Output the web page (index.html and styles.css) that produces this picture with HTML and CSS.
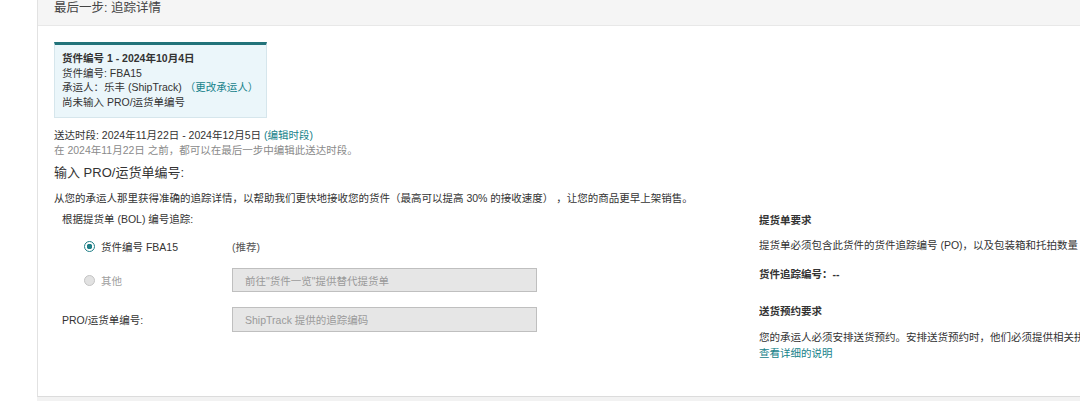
FILE: index.html
```html
<!DOCTYPE html>
<html lang="zh-CN">
<head>
<meta charset="utf-8">
<title>最后一步: 追踪详情</title>
<link rel="stylesheet" href="styles.css">
</head>
<body>
<div class="frame">
  <div class="panel">
    <div class="panel-head">最后一步: 追踪详情</div>
    <div class="panel-body">
      <div class="card">
        <div class="card-title">货件编号 1 - 2024年10月4日</div>
        <div>货件编号: FBA15</div>
        <div>承运人：乐丰 (ShipTrack) <a class="link">（更改承运人）</a></div>
        <div>尚未输入 PRO/运货单编号</div>
      </div>
      <div class="window">
        <div>送达时段: 2024年11月22日 - 2024年12月5日 <a class="link">(编辑时段)</a></div>
        <div class="muted">在 2024年11月22日 之前，都可以在最后一步中编辑此送达时段。</div>
      </div>
      <h2 class="section-title">输入 PRO/运货单编号:</h2>
      <p class="desc">从您的承运人那里获得准确的追踪详情，以帮助我们更快地接收您的货件（最高可以提高 30% 的接收速度）&nbsp;，让您的商品更早上架销售。</p>
      <div class="columns">
        <div class="form">
          <div class="form-label">根据提货单 (BOL) 编号追踪:</div>
          <div class="row row-1">
            <div class="radio-cell">
              <span class="radio checked"></span>
              <span>货件编号 FBA15</span>
            </div>
            <div class="field-cell note">(推荐)</div>
          </div>
          <div class="row row-2">
            <div class="radio-cell disabled">
              <span class="radio off"></span>
              <span>其他</span>
            </div>
            <div class="field-cell"><div class="input">前往"货件一览"提供替代提货单</div></div>
          </div>
          <div class="row row-3">
            <div class="plain-label">PRO/运货单编号:</div>
            <div class="field-cell"><div class="input">ShipTrack 提供的追踪编码</div></div>
          </div>
        </div>
        <div class="aside">
          <div class="aside-title">提货单要求</div>
          <div class="aside-text">提货单必须包含此货件的货件追踪编号 (PO)，以及包装箱和托拍数量</div>
          <div class="aside-title po">货件追踪编号：--</div>
          <div class="aside-title appt">送货预约要求</div>
          <div class="aside-text appt-text">您的承运人必须安排送货预约。安排送货预约时，他们必须提供相关拼装信息。<br><a class="link">查看详细的说明</a></div>
        </div>
      </div>
    </div>
  </div>
  <div class="below"></div>
</div>
</body>
</html>
```

FILE: styles.css
```css
html, body {
  margin: 0;
  padding: 0;
  background: #ffffff;
  overflow: hidden;
}
body {
  font-family: "Liberation Sans", "Noto Sans CJK SC", sans-serif;
  font-size: 10.5px;
  color: #333333;
  width: 1080px;
  height: 401px;
}
.frame {
  width: 1080px;
  height: 401px;
  overflow: hidden;
}
.panel {
  margin-left: 37px;
  height: 397px;
  border-left: 1px solid #e2e2e2;
  border-bottom: 1px solid #dcdcdc;
  box-sizing: border-box;
  background: #ffffff;
}
.below {
  margin-left: 37px;
  height: 4px;
  background: #f2f2f2;
}
.panel-head {
  height: 26px;
  box-sizing: border-box;
  background: #f5f5f5;
  border-bottom: 1px solid #e8e8e8;
  padding-left: 16px;
  font-size: 12.5px;
  line-height: 17px;
  color: #444444;
}
.panel-body {
  padding: 16px 0 0 16px;
}
.card {
  width: 213px;
  height: 76px;
  box-sizing: border-box;
  background: #ebf6fa;
  border: 1px solid #d6e6ec;
  border-top: 3px solid #22737a;
  padding: 6px 0 0 7px;
  line-height: 14.7px;
  color: #333333;
}
.card-title {
  font-weight: bold;
}
.link {
  color: #16828a;
  text-decoration: none;
}
.window {
  margin-top: 10px;
  line-height: 15px;
}
.muted {
  color: #8a8a8a;
}
.section-title {
  margin: 6px 0 0 0;
  font-size: 13px;
  font-weight: normal;
  line-height: 18px;
  color: #333333;
}
.desc {
  margin: 9px 0 0 0;
  line-height: 15px;
}
.columns {
  display: flex;
}
.form {
  width: 705px;
  flex: none;
  padding-left: 8px;
  box-sizing: border-box;
}
.form-label {
  margin-top: 6px;
  line-height: 15px;
}
.row {
  display: flex;
  align-items: center;
}
.row-1 {
  height: 24px;
  margin-top: 7px;
}
.row-2 {
  height: 24px;
  margin-top: 10px;
}
.row-3 {
  height: 25px;
  margin-top: 15px;
}
.radio-cell {
  width: 170px;
  display: flex;
  align-items: center;
  gap: 6px;
  padding-left: 22px;
  box-sizing: border-box;
}
.plain-label {
  width: 170px;
}
.disabled {
  color: #a0a0a0;
}
.radio {
  width: 11px;
  height: 11px;
  border-radius: 50%;
  box-sizing: border-box;
  display: inline-block;
  flex: none;
}
.radio.checked {
  border: 1.5px solid #1f7f87;
  background: radial-gradient(circle, #1f7f87 0 2.6px, #ffffff 3px);
}
.radio.off {
  border: 1px solid #c4c4c4;
  background: #e2e2e2;
}
.note {
  color: #555555;
}
.input {
  width: 305px;
  height: 100%;
  box-sizing: border-box;
  background: #e6e6e6;
  border: 1px solid #bfbfbf;
  color: #9a9a9a;
  padding-left: 12px;
  display: flex;
  align-items: center;
}
.field-cell {
  height: 100%;
  display: flex;
  align-items: center;
}
.aside {
  flex: 1;
  min-width: 0;
  white-space: nowrap;
  overflow: hidden;
}
.aside-title {
  font-weight: bold;
  line-height: 15px;
  margin-top: 7px;
}
.aside-text {
  line-height: 15px;
  margin-top: 10px;
}
.aside-title.po {
  margin-top: 14px;
}
.aside-title.appt {
  margin-top: 22px;
}
.aside-text.appt-text {
  margin-top: 10px;
  line-height: 16px;
}
```
